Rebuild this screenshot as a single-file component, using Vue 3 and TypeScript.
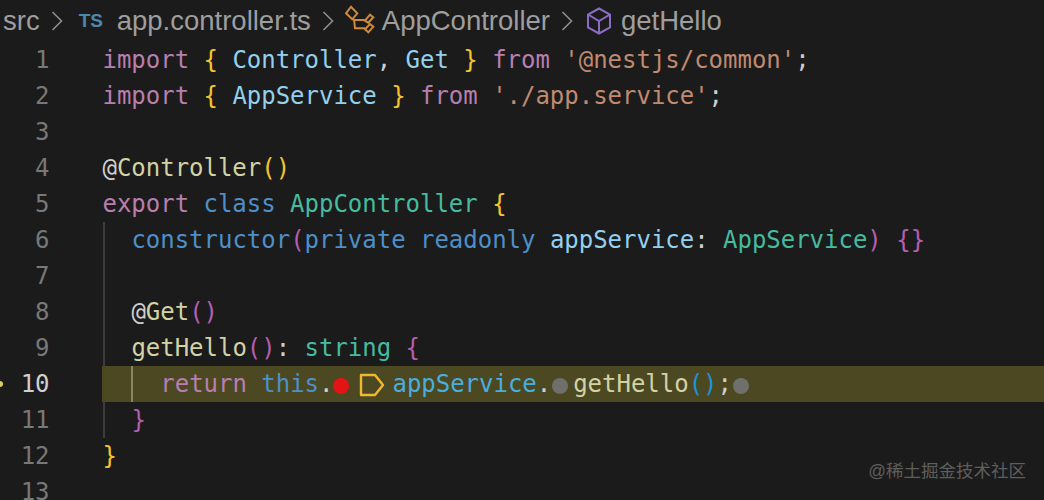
<script setup lang="ts">
type Token = { t: string; c?: string };
type Line = { n: number; indent: number; tokens: Token[]; active?: boolean };

const k = (t: string): Token => ({ t, c: 'kw' });
const b = (t: string): Token => ({ t, c: 'blue' });
const v = (t: string): Token => ({ t, c: 'var' });
const f = (t: string): Token => ({ t, c: 'fn' });
const ty = (t: string): Token => ({ t, c: 'type' });
const s = (t: string): Token => ({ t, c: 'str' });
const y = (t: string): Token => ({ t, c: 'by' });
const p = (t: string): Token => ({ t, c: 'bp' });
const w = (t: string): Token => ({ t });

const lines: Line[] = [
  { n: 1, indent: 0, tokens: [k('import'), w(' '), y('{'), w(' '), v('Controller'), w(', '), v('Get'), w(' '), y('}'), w(' '), k('from'), w(' '), s("'@nestjs/common'"), w(';')] },
  { n: 2, indent: 0, tokens: [k('import'), w(' '), y('{'), w(' '), v('AppService'), w(' '), y('}'), w(' '), k('from'), w(' '), s("'./app.service'"), w(';')] },
  { n: 3, indent: 0, tokens: [] },
  { n: 4, indent: 0, tokens: [w('@'), f('Controller'), y('()')] },
  { n: 5, indent: 0, tokens: [k('export'), w(' '), b('class'), w(' '), ty('AppController'), w(' '), y('{')] },
  { n: 6, indent: 1, tokens: [b('constructor'), p('('), b('private'), w(' '), b('readonly'), w(' '), v('appService'), w(': '), ty('AppService'), p(')'), w(' '), p('{}')] },
  { n: 7, indent: 1, tokens: [] },
  { n: 8, indent: 1, tokens: [w('@'), f('Get'), p('()')] },
  { n: 9, indent: 1, tokens: [f('getHello'), p('()'), w(': '), ty('string'), w(' '), p('{')] },
  { n: 10, indent: 2, active: true, tokens: [] },
  { n: 11, indent: 1, tokens: [p('}')] },
  { n: 12, indent: 0, tokens: [y('}')] },
  { n: 13, indent: 0, tokens: [] },
];
</script>

<template>
  <div class="editor">
    <nav class="crumbs">
      <span class="crumb src">src</span>
      <svg class="chev c1" width="12" height="20" viewBox="0 0 12 20"><path d="M1.500 1l9 9-9 9" /></svg>
      <span class="ts">TS</span>
      <span class="crumb">app.controller.ts</span>
      <svg class="chev c2" width="12" height="20" viewBox="0 0 12 20"><path d="M1.500 1l9 9-9 9" /></svg>
      <svg class="cls" width="30" height="30" viewBox="0 0 30 30">
        <path d="M1 8.300 6 1.700l6.300 6.600-5 6zM20 15.700l5-6 3.300 2.600-5 5.400zM20 24.300l5-5.300 3.300 2.700-5 5.600z" />
        <path d="M9 14l1 9.300h10M10 15h10.500" />
      </svg>
      <span class="crumb">AppController</span>
      <svg class="chev c3" width="12" height="20" viewBox="0 0 12 20"><path d="M1.500 1l9 9-9 9" /></svg>
      <svg class="cube" width="26" height="28" viewBox="0 0 26 28">
        <path d="M13 1.500l11 6v13l-11 6-11-6v-13zM2 7.500l11 6.500 11-6.500M13 14v12.500" />
      </svg>
      <span class="crumb">getHello</span>
    </nav>

    <div class="code">
      <div v-for="line in lines" :key="line.n" class="row" :class="{ active: line.active }">
        <span v-if="line.active" class="glyph"></span>
        <span class="num">{{ line.n }}</span>
        <div class="text">
          <span v-for="i in line.indent" :key="i" class="guide"></span>
          <template v-if="line.active">
            <span class="kw">return</span> <span class="blue">this</span>.<span class="dot red"></span><svg class="bp" width="26" height="24" viewBox="0 0 26 24"><path d="M2 2h14l8 10-8 10H2z" /></svg><span class="fld">appService</span>.<span class="dot grey"></span><span class="fn">getHello</span><span class="bb">()</span>;<span class="dot grey last"></span>
          </template>
          <template v-else>
            <span v-for="(tok, i) in line.tokens" :key="i" :class="tok.c">{{ tok.t }}</span>
          </template>
        </div>
      </div>
    </div>

    <div class="mark">@稀土掘金技术社区</div>
  </div>
</template>

<style>
html, body { margin: 0; background: #1b1b1b; }
</style>

<style scoped>
.editor {
  position: relative;
  width: 1044px;
  height: 500px;
  overflow: hidden;
  background: #1b1b1b;
}
.crumbs {
  display: flex;
  align-items: center;
  height: 42px;
  padding-left: 3px;
  font-family: "Liberation Sans", Arial, sans-serif;
  font-size: 27.500px;
  color: #9e9e9e;
}
.crumb { flex: none; white-space: nowrap; }
.chev { flex: none; fill: none; stroke: #8e8e8e; stroke-width: 1.6; }
.c1 { margin: 0 16px 0 11px; }
.c2 { margin: 0 11px 0 11px; }
.c3 { margin: 0 13px 0 11px; }
.ts {
  flex: none;
  width: 38px;
  font-size: 19px;
  font-weight: 700;
  color: #4a88ad;
}
.cls { flex: none; margin: 0 7px 2px 0; fill: none; stroke: #d08a38; stroke-width: 2; }
.cube { flex: none; margin: 0 9px 0 0; fill: none; stroke: #8a6cc4; stroke-width: 2; }
.code {
  font-family: "DejaVu Sans Mono", monospace;
  font-size: 24px;
  letter-spacing: -0.02px;
  color: #cfcfcf;
}
.row {
  position: relative;
  display: flex;
  height: 36px;
  line-height: 36px;
}
.num {
  flex: none;
  width: 49.500px;
  margin-right: 52.500px;
  text-align: right;
  color: #787878;
}
.text { flex: 1; display: flex; padding-left: 0.500px; white-space: pre; }
.text > span:not(.guide), .text > svg { flex: none; }
.active .text { display: block; background: #4c4822; }
.active .num { color: #d0d0d0; }
.guide {
  flex: none;
  display: inline-block;
  width: 28.900px;
  height: 36px;
  box-sizing: border-box;
  border-left: 2px solid #3c3c3c;
  vertical-align: top;
}
.active .guide { border-left-color: #4c4822; }
.active .guide + .guide { border-left-color: #8a8660; }
.glyph {
  position: absolute;
  left: -3px;
  top: 15px;
  width: 6px;
  height: 6px;
  border-radius: 50%;
  background: #d8d060;
}
.kw { color: #b87fae; }
.blue { color: #4e8fc8; }
.var { color: #92d0ee; }
.fld { color: #49aede; }
.fn { color: #d2d2a4; }
.type { color: #46bb9f; }
.str { color: #c08a70; }
.by { color: #f3c42d; }
.bp { color: #b45eb0; }
.bb { color: #2290d8; }
svg.bp { display: inline-block; margin: 0 7px 0 10px; vertical-align: -5px; fill: none; stroke: #f0b832; stroke-width: 2.4; stroke-linejoin: round; }
.dot {
  display: inline-block;
  width: 16px;
  height: 16px;
  border-radius: 50%;
  vertical-align: -2px;
}
.red { background: #e51414; }
.grey { margin-left: 1px; margin-right: 5px; background: #6f6f6b; }
.last { margin-left: 1px; }
.mark {
  position: absolute;
  right: 18px;
  top: 460px;
  font-family: "Liberation Sans", "Noto Sans CJK SC", sans-serif;
  font-size: 17.500px;
  line-height: 22px;
  color: #5e5e5e;
}
</style>
